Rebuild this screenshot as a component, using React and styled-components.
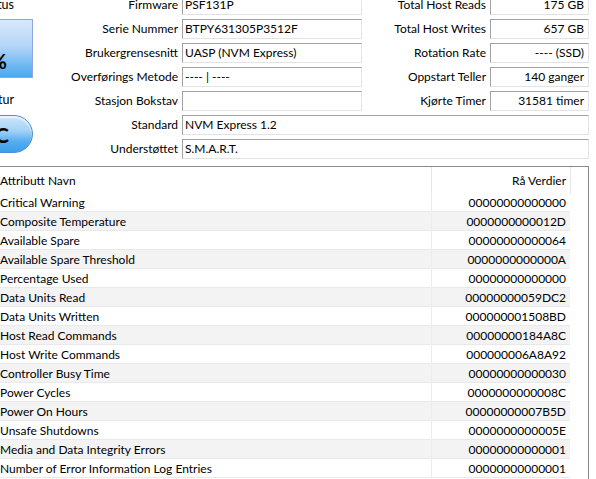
import React from 'react'
import styled, { createGlobalStyle } from 'styled-components'

const Global = createGlobalStyle`
    html, body {
        margin: 0;
        padding: 0;
        background: #fff;
        overflow: hidden;
    }
`

const topRows = [
    { label: 'Firmware', value: 'PSF131P', rLabel: 'Total Host Reads', rValue: '175 GB' },
    { label: 'Serie Nummer', value: 'BTPY631305P3512F', rLabel: 'Total Host Writes', rValue: '657 GB' },
    { label: 'Brukergrensesnitt', value: 'UASP (NVM Express)', rLabel: 'Rotation Rate', rValue: '---- (SSD)' },
    { label: 'Overførings Metode', value: '---- | ----', rLabel: 'Oppstart Teller', rValue: '140 ganger' },
    { label: 'Stasjon Bokstav', value: '', rLabel: 'Kjørte Timer', rValue: '31581 timer' },
]

const wideRows = [
    { label: 'Standard', value: 'NVM Express 1.2' },
    { label: 'Understøttet', value: 'S.M.A.R.T.' },
]

const attributes = [
    ['Critical Warning', '00000000000000'],
    ['Composite Temperature', '0000000000012D'],
    ['Available Spare', '00000000000064'],
    ['Available Spare Threshold', '0000000000000A'],
    ['Percentage Used', '00000000000000'],
    ['Data Units Read', '00000000059DC2'],
    ['Data Units Written', '000000001508BD'],
    ['Host Read Commands', '00000000184A8C'],
    ['Host Write Commands', '000000006A8A92'],
    ['Controller Busy Time', '00000000000030'],
    ['Power Cycles', '0000000000008C'],
    ['Power On Hours', '00000000007B5D'],
    ['Unsafe Shutdowns', '0000000000005E'],
    ['Media and Data Integrity Errors', '00000000000001'],
    ['Number of Error Information Log Entries', '00000000000001'],
]

function App() {
    return (
        <Window>
            <Global />
            <Top>
                <Side>
                    <SideLabel>Health Status</SideLabel>
                    <HealthBox>100 %</HealthBox>
                    <SideLabel gap={12}>Temperatur</SideLabel>
                    <TempPill>36 °C</TempPill>
                </Side>
                <Info>
                    {topRows.map((r) => (
                        <React.Fragment key={r.label}>
                            <Label>{r.label}</Label>
                            <Field>{r.value}</Field>
                            <Label>{r.rLabel}</Label>
                            <Field right>{r.rValue}</Field>
                        </React.Fragment>
                    ))}
                    {wideRows.map((r) => (
                        <React.Fragment key={r.label}>
                            <Label>{r.label}</Label>
                            <Field wide>{r.value}</Field>
                        </React.Fragment>
                    ))}
                </Info>
            </Top>

            <List>
                <HeadRow>
                    <HeadCell>Attributt Navn</HeadCell>
                    <HeadCell right>Rå Verdier</HeadCell>
                </HeadRow>
                {attributes.map(([name, raw], i) => (
                    <Row key={name} alt={i % 2 === 1}>
                        <NameCell>{name}</NameCell>
                        <ValueCell>{raw}</ValueCell>
                    </Row>
                ))}
            </List>
        </Window>
    )
}

export default App

const Window = styled.div`
    width: 596px;
    height: 479px;
    overflow: hidden;
    background: #fff;
    color: #000;
    font-family: Lato, "Noto Sans", sans-serif;
    font-size: 12px;
`

const Top = styled.div`
    display: flex;
    margin-top: -5px;
`

const Side = styled.div`
    width: 34px;
    flex: none;
    display: flex;
    flex-direction: column;
    align-items: flex-end;
`

const SideLabel = styled.div`
    height: 20px;
    line-height: 20px;
    margin-top: ${(props) => props.gap || 0}px;
    white-space: nowrap;
    padding-right: 20px;
    font-size: 12.5px;
`

const HealthBox = styled.div`
    box-sizing: border-box;
    flex: none;
    margin-top: 4px;
    width: 100px;
    height: 59px;
    margin-right: 1px;
    border: 1px solid #8fa6dc;
    background: linear-gradient(#d8e8fb 0%, #b5d6f7 45%, #6fb8f2 80%, #4aa8f0 100%);
    display: flex;
    align-items: center;
    justify-content: flex-end;
    padding: 24px 25px 0 0;
    font-size: 20px;
    font-weight: bold;
    white-space: nowrap;
`

const TempPill = styled.div`
    box-sizing: border-box;
    flex: none;
    margin-top: 5px;
    width: 100px;
    height: 38px;
    margin-right: 1px;
    border: 1px solid #4d8fd6;
    border-radius: 19px;
    background: linear-gradient(#cde6fb 0%, #a6d2f7 40%, #57aef0 70%, #3c9fec 100%);
    box-shadow: inset 0 2px 2px rgba(255, 255, 255, 0.7);
    display: flex;
    align-items: center;
    justify-content: flex-end;
    padding-right: 23px;
    font-size: 21px;
    font-weight: bold;
    white-space: nowrap;
`

const Info = styled.div`
    display: grid;
    grid-template-columns: 148px 180px 128px 99px;
    grid-auto-rows: 20px;
    row-gap: 4px;
`

const Label = styled.div`
    text-align: right;
    padding-right: 4px;
    line-height: 20px;
    white-space: nowrap;
`

const Field = styled.div`
    box-sizing: border-box;
    grid-column: ${(props) => (props.wide ? '2 / 5' : 'auto')};
    border-top: 1px solid #a2a2a2;
    border-left: 1px solid #a2a2a2;
    border-right: 1px solid #e3e3e3;
    border-bottom: 1px solid #e3e3e3;
    line-height: 18px;
    padding: 0 4px 0 2px;
    text-align: ${(props) => (props.right ? 'right' : 'left')};
    white-space: nowrap;
    overflow: hidden;
`

const List = styled.div`
    margin-top: 7px;
    width: 589px;
    height: 320px;
    box-sizing: border-box;
    border-top: 1px solid #8a8a8a;
    border-right: 1px solid #8a8a8a;
`

const HeadRow = styled.div`
    display: grid;
    grid-template-columns: 432px 139px;
    height: 26px;
`

const HeadCell = styled.div`
    box-sizing: border-box;
    border-right: 1px solid #e5e5e5;
    line-height: 27px;
    padding-right: 4px;
    text-align: ${(props) => (props.right ? 'right' : 'left')};
`

const Row = styled.div`
    box-sizing: border-box;
    display: grid;
    grid-template-columns: 432px 138px;
    width: 570px;
    height: 19px;
    border-bottom: 1px solid #e9e9e9;
    background: ${(props) => (props.alt ? '#f3f3f3' : '#fff')};
    line-height: 19px;
`

const NameCell = styled.div`
    border-right: 1px solid #ececec;
    white-space: nowrap;
`

const ValueCell = styled.div`
    text-align: right;
    padding-right: 4px;
    white-space: nowrap;
`
